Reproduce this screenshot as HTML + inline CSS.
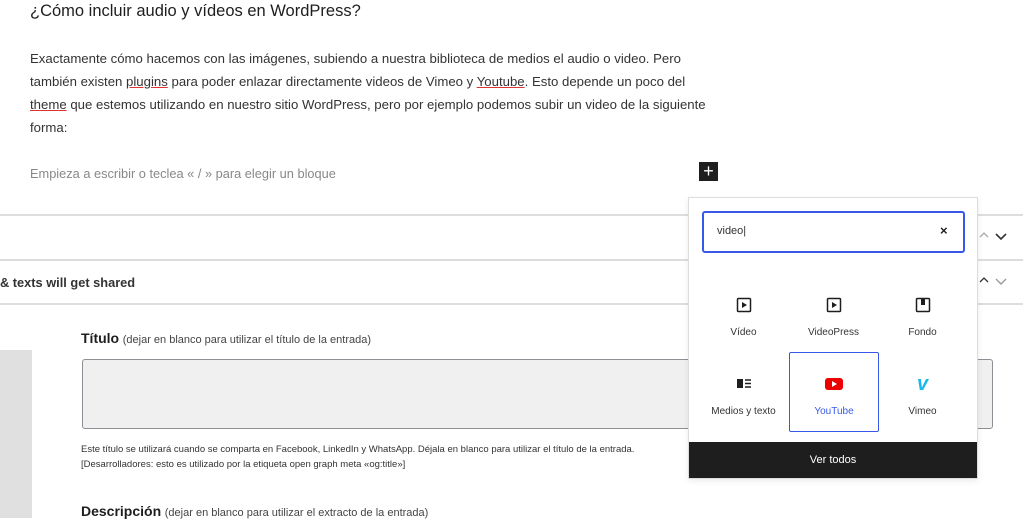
<!DOCTYPE html>
<html><head><meta charset="utf-8"><style>
body{margin:0;width:1023px;height:518px;overflow:hidden;background:#fff;font-family:"Liberation Sans",sans-serif;color:#1e1e1e;position:relative}
.a{position:absolute}
.p{font-size:13.2px;line-height:23px;color:#333;white-space:nowrap}
.hr{position:absolute;left:0;width:1023px;height:2px;background:#ddd}
.cell{position:absolute;width:89px;height:79px;text-align:center;font-size:10px;color:#333}
.cell .ic{position:absolute;left:0;right:0;top:23px;height:16px}
.cell .lb{position:absolute;left:0;right:0;top:53px}
u{text-decoration-color:#d33}
</style></head><body>
<div class="a" style="left:30px;top:2px;font-size:16.5px;color:#1e1e1e">¿Cómo incluir audio y vídeos en WordPress?</div>
<div class="a p" style="left:30px;top:47px">Exactamente cómo hacemos con las imágenes, subiendo a nuestra biblioteca de medios el audio o video. Pero<br>también existen <u>plugins</u> para poder enlazar directamente videos de Vimeo y <u>Youtube</u>. Esto depende un poco del<br><u>theme</u> que estemos utilizando en nuestro sitio WordPress, pero por ejemplo podemos subir un video de la siguiente<br>forma:</div>
<div class="a" style="left:30px;top:166px;font-size:12.8px;color:#888">Empieza a escribir o teclea « / » para elegir un bloque</div>
<div class="a" style="left:699px;top:162px;width:19px;height:19px;background:#1e1e1e;color:#fff;font-size:18px;line-height:18px;text-align:center">+</div>
<div class="hr" style="top:214px"></div>
<div class="hr" style="top:259px"></div>
<div class="hr" style="top:303px"></div>
<div class="a" style="left:0;top:275px;font-size:12.8px;font-weight:bold;color:#333">&amp; texts will get shared</div>
<svg class="a" style="left:994px;top:232px" width="14" height="10" viewBox="0 0 14 10"><path d="M2 2l5 5 5-5" fill="none" stroke="#333" stroke-width="1.6"/></svg>
<svg class="a" style="left:994px;top:277px" width="14" height="10" viewBox="0 0 14 10"><path d="M2 2l5 5 5-5" fill="none" stroke="#999" stroke-width="1.4"/></svg>
<div class="a" style="left:0;top:350px;width:32px;height:168px;background:#e0e0e0"></div>
<div class="a" style="left:81px;top:330px;font-size:13px"><b style="font-size:14px">Título</b> <span style="font-size:11px;color:#444">(dejar en blanco para utilizar el título de la entrada)</span></div>
<div class="a" style="left:82px;top:359px;width:909px;height:68px;background:#f0f0f0;border:1px solid #8c8f94;border-radius:3px"></div>
<div class="a" style="left:81px;top:442px;font-size:9.5px;line-height:15px;color:#333">Este título se utilizará cuando se comparta en Facebook, LinkedIn y WhatsApp. Déjala en blanco para utilizar el título de la entrada.<br>[Desarrolladores: esto es utilizado por la etiqueta open graph meta «og:title»]</div>
<div class="a" style="left:81px;top:503px;font-size:13px"><b style="font-size:14px">Descripción</b> <span style="font-size:11px;color:#444">(dejar en blanco para utilizar el extracto de la entrada)</span></div>

<div class="a" style="left:688px;top:197px;width:288px;height:280px;background:#fff;border:1px solid #ddd;box-shadow:0 2px 6px rgba(0,0,0,.08)">
 <div class="a" style="left:13px;top:13px;width:259px;height:38px;border:2px solid #3858e9;border-radius:3px"></div>
 <div class="a" style="left:28px;top:27px;font-size:11px;color:#333">video|</div>
 <div class="a" style="left:251px;top:25px;font-size:13px;font-weight:bold">×</div>
 <div class="cell" style="left:10px;top:76px"><div class="ic"><svg width="16" height="16" viewBox="0 0 16 16"><rect x="1.5" y="1.5" width="13" height="13" rx="1" fill="none" stroke="#1e1e1e" stroke-width="1.5"/><path d="M6 5v6l5-3z" fill="#1e1e1e"/></svg></div><div class="lb">Vídeo</div></div>
 <div class="cell" style="left:100px;top:76px"><div class="ic"><svg width="16" height="16" viewBox="0 0 16 16"><rect x="1.5" y="1.5" width="13" height="13" rx="1" fill="none" stroke="#1e1e1e" stroke-width="1.5"/><path d="M6 5v6l5-3z" fill="#1e1e1e"/></svg></div><div class="lb">VideoPress</div></div>
 <div class="cell" style="left:189px;top:76px"><div class="ic"><svg width="16" height="16" viewBox="0 0 16 16"><rect x="1.5" y="1.5" width="13" height="13" rx="1" fill="none" stroke="#1e1e1e" stroke-width="1.5"/><rect x="6" y="2" width="4" height="6" fill="#1e1e1e"/></svg></div><div class="lb">Fondo</div></div>
 <div class="cell" style="left:10px;top:155px"><div class="ic"><svg width="16" height="16" viewBox="0 0 16 16"><rect x="1" y="3" width="6" height="9" fill="#1e1e1e"/><path d="M9 4h6M9 7.5h6M9 11h6" stroke="#1e1e1e" stroke-width="1.4"/></svg></div><div class="lb">Medios y texto</div></div>
 <div class="cell" style="left:100px;top:154px;border:1px solid #3858e9;border-radius:2px;width:88px;height:78px"><div class="ic"><svg width="20" height="16" viewBox="0 0 20 16"><rect x="1" y="2" width="18" height="12" rx="3" fill="#e00"/><path d="M8 5v6l5-3z" fill="#fff"/></svg></div><div class="lb" style="color:#3858e9">YouTube</div></div>
 <div class="cell" style="left:189px;top:155px"><div class="ic"><span style="color:#1ab7ea;font-weight:bold;font-size:20px;font-style:italic;line-height:16px">v</span></div><div class="lb">Vimeo</div></div>
 <div class="a" style="left:0;top:244px;width:288px;height:36px;background:#1e1e1e;color:#fff;font-size:11px;text-align:center;line-height:36px">Ver todos</div>
</div>
<svg class="a" style="left:978px;top:230px" width="12" height="10" viewBox="0 0 12 10"><path d="M2 7l4-4 4 4" fill="none" stroke="#aaa" stroke-width="1.3"/></svg>
<svg class="a" style="left:978px;top:275px" width="12" height="10" viewBox="0 0 12 10"><path d="M2 7l4-4 4 4" fill="none" stroke="#333" stroke-width="1.3"/></svg>
</body></html>
